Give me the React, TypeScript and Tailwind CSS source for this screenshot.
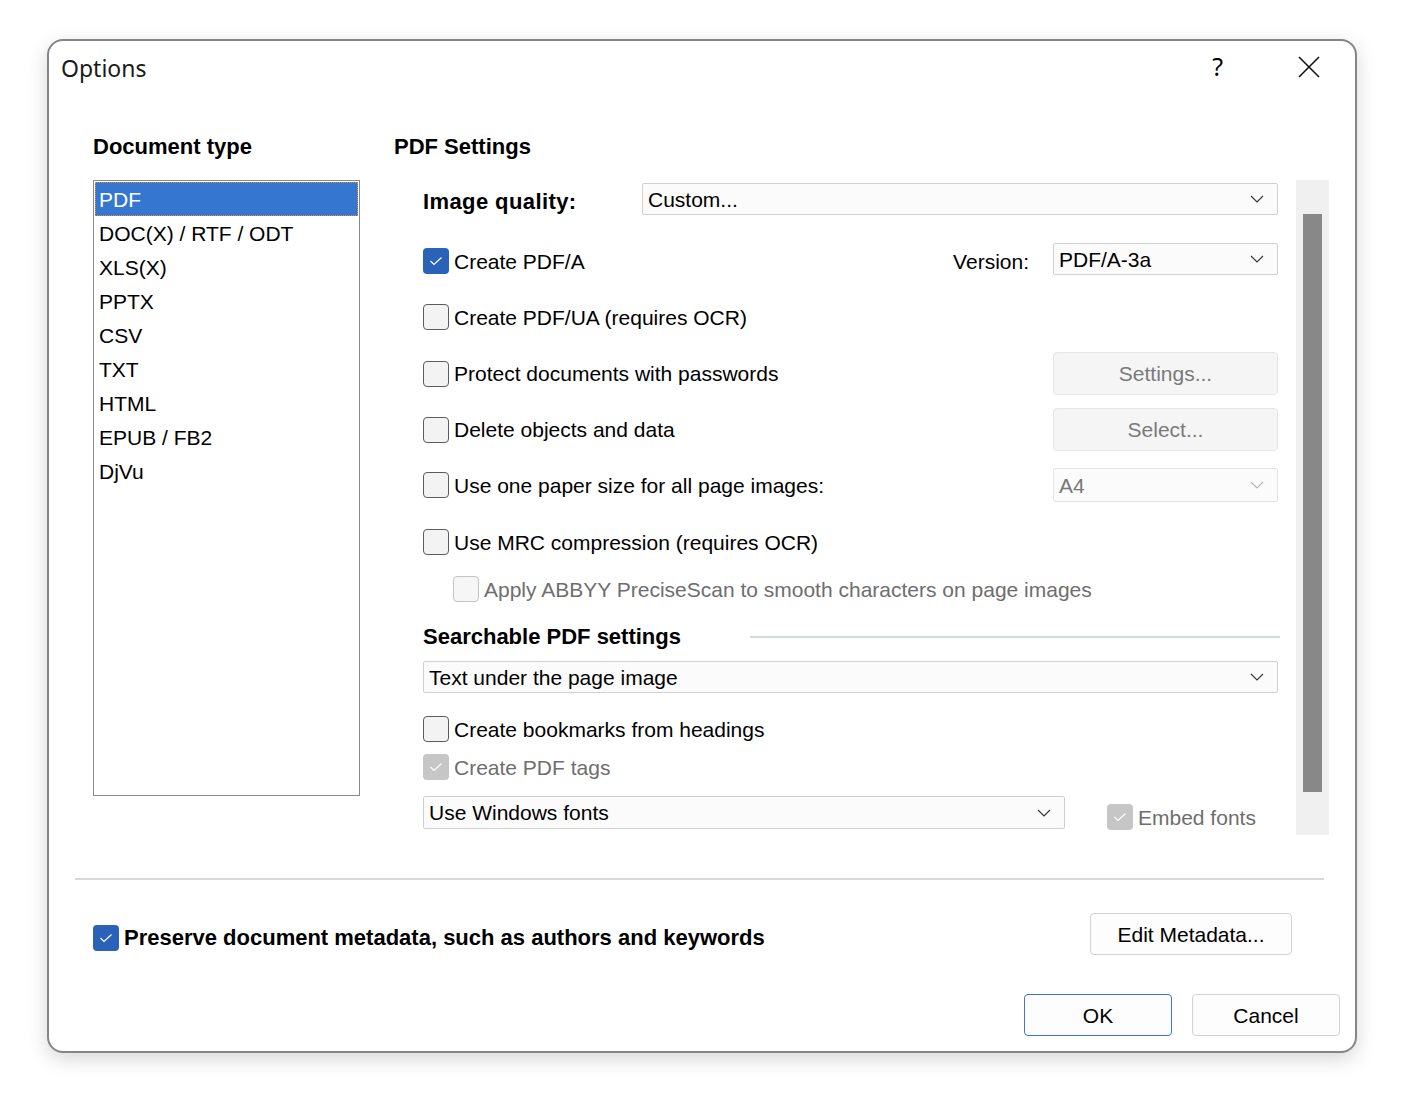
import React from 'react';

const FONT = "font-['Liberation_Sans',Arial,sans-serif]";

const Chevron: React.FC<{ color?: string }> = ({ color = '#333' }) => (
  <svg width="14" height="8" viewBox="0 0 14 8" fill="none">
    <polyline points="1,1 7,7 13,1" stroke={color} strokeWidth="1.1" />
  </svg>
);

const Check: React.FC = () => (
  <svg width="14" height="10" viewBox="0 0 14 10" fill="none">
    <polyline points="1.5,5 5,8.5 12.5,1.5" stroke="white" strokeWidth="1.2" />
  </svg>
);

const Checkbox: React.FC<{ checked?: boolean; disabled?: boolean }> = ({ checked, disabled }) => {
  if (checked) {
    return (
      <div
        className={`w-[26px] h-[26px] rounded-[4px] flex items-center justify-center shrink-0 ${
          disabled ? 'bg-[#c6c6c6]' : 'bg-[#2a62b9]'
        }`}
      >
        <Check />
      </div>
    );
  }
  return (
    <div
      className={`w-[26px] h-[26px] rounded-[4px] border shrink-0 ${
        disabled ? 'border-[#c4c4c4] bg-[#f6f6f6]' : 'border-[#5c5c5c] bg-[#f3f3f3]'
      }`}
    />
  );
};

const CheckRow: React.FC<{ label: string; checked?: boolean; disabled?: boolean; bold?: boolean }> = ({
  label,
  checked,
  disabled,
  bold,
}) => (
  <div className="flex items-center gap-[5px]">
    <Checkbox checked={checked} disabled={disabled} />
    <span
      className={`${bold ? 'font-bold text-[22px]' : 'text-[21px]'} ${disabled ? 'text-[#6e6e6e]' : 'text-black'} leading-none whitespace-nowrap`}
    >
      {label}
    </span>
  </div>
);

const Dropdown: React.FC<{ value: string; className?: string; disabled?: boolean }> = ({
  value,
  className = '',
  disabled,
}) => (
  <div
    className={`flex items-center justify-between pl-[5px] pr-[13px] border border-[#d0d0d0] rounded-[2px] bg-[#fbfbfb] ${className}`}
  >
    <span className={`text-[21px] leading-none ${disabled ? 'text-[#777]' : 'text-black'}`}>{value}</span>
    <Chevron color={disabled ? '#b5b5b5' : '#333'} />
  </div>
);

const Button: React.FC<{ label: string; className?: string; disabled?: boolean; primary?: boolean }> = ({
  label,
  className = '',
  disabled,
  primary,
}) => (
  <div
    className={`flex items-center justify-center rounded-[4px] border text-[21px] leading-none ${
      disabled
        ? 'bg-[#f5f5f5] border-[#e6e6e6] text-[#7a7a7a]'
        : primary
        ? 'bg-[#fdfdfd] border-[#3a78cf] text-black'
        : 'bg-[#fdfdfd] border-[#d2d2d2] text-black'
    } ${className}`}
  >
    {label}
  </div>
);

const docTypes = ['PDF', 'DOC(X) / RTF / ODT', 'XLS(X)', 'PPTX', 'CSV', 'TXT', 'HTML', 'EPUB / FB2', 'DjVu'];

export default function App() {
  return (
    <div className={`w-[1404px] h-[1108px] bg-white pt-[39px] pl-[47px] ${FONT}`}>
      <div className="w-[1310px] h-[1014px] border-2 border-[#858585] rounded-[16px] bg-white shadow-[0_6px_20px_rgba(0,0,0,0.16)] flex flex-col">
        {/* title bar */}
        <div className="flex items-center h-[30px] mt-[12px] pl-[12px]">
          <span className="font-['Noto_Sans',sans-serif] text-[23px] text-[#1a1a1a] leading-none flex-1">Options</span>
          <span className="font-['Noto_Sans',sans-serif] text-[25px] leading-none text-black mr-[75px] -mt-[3px]">?</span>
          <svg width="22" height="22" viewBox="0 0 22 22" className="mr-[35px] -mt-[2px]">
            <line x1="1" y1="1" x2="21" y2="21" stroke="#111" strokeWidth="1.6" />
            <line x1="21" y1="1" x2="1" y2="21" stroke="#111" strokeWidth="1.6" />
          </svg>
        </div>

        {/* main */}
        <div className="flex mt-[50px] pl-[44px]">
          {/* left column */}
          <div className="w-[267px] shrink-0">
            <div className="h-[28px] flex items-center font-bold text-[22px] leading-none">Document type</div>
            <div className="mt-[19px] h-[616px] border border-[#8a8a8a] p-[1px]">
              {docTypes.map((t, i) => (
                <div
                  key={t}
                  className={`h-[34px] flex items-center pl-[3px] text-[21px] leading-none ${
                    i === 0
                      ? 'bg-[#3476d0] text-white border border-dotted border-[#e08a3c]'
                      : 'text-black border border-transparent'
                  }`}
                >
                  {t}
                </div>
              ))}
            </div>
          </div>

          {/* right column */}
          <div className="ml-[34px] w-[935px]">
            <div className="h-[28px] flex items-center font-bold text-[22px] leading-none">PDF Settings</div>
            <div className="mt-[19px] h-[655px] flex">
              <div className="w-[884px] pl-[29px] flex flex-col">
                <div className="mt-[3px] h-[32px] flex items-center">
                  <span className="w-[219px] font-bold text-[22px] tracking-[0.4px] leading-none mt-[5px]">Image quality:</span>
                  <Dropdown value="Custom..." className="w-[636px] h-[32px]" />
                </div>

                <div className="mt-[28px] h-[36px] flex items-center">
                  <div className="flex-1">
                    <CheckRow label="Create PDF/A" checked />
                  </div>
                  <span className="text-[21px] leading-none mr-[24px]">Version:</span>
                  <Dropdown value="PDF/A-3a" className="w-[225px] h-[32px] self-start" />
                </div>

                <div className="mt-[20px] h-[36px] flex items-center">
                  <CheckRow label="Create PDF/UA (requires OCR)" />
                </div>

                <div className="mt-[17px] h-[43px] flex items-center justify-between">
                  <CheckRow label="Protect documents with passwords" />
                  <Button label="Settings..." disabled className="w-[225px] h-[43px]" />
                </div>

                <div className="mt-[13px] h-[43px] flex items-center justify-between">
                  <CheckRow label="Delete objects and data" />
                  <Button label="Select..." disabled className="w-[225px] h-[43px]" />
                </div>

                <div className="mt-[17px] h-[34px] flex items-center justify-between">
                  <CheckRow label="Use one paper size for all page images:" />
                  <Dropdown value="A4" disabled className="w-[225px] h-[34px] bg-[#f8f8f8] border-[#e4e4e4]" />
                </div>

                <div className="mt-[22px] h-[36px] flex items-center">
                  <CheckRow label="Use MRC compression (requires OCR)" />
                </div>

                <div className="mt-[11px] h-[36px] flex items-center pl-[30px]">
                  <CheckRow label="Apply ABBYY PreciseScan to smooth characters on page images" disabled />
                </div>

                <div className="mt-[15px] h-[30px] flex items-center">
                  <span className="w-[327px] font-bold text-[22px] leading-none">Searchable PDF settings</span>
                  <div className="flex-1 mr-[-2px] h-[2px] bg-[#d5dae2]" />
                </div>

                <Dropdown value="Text under the page image" className="mt-[9px] w-[855px] h-[32px]" />

                <div className="mt-[18px] h-[36px] flex items-center">
                  <CheckRow label="Create bookmarks from headings" />
                </div>

                <div className="mt-[2px] h-[36px] flex items-center">
                  <CheckRow label="Create PDF tags" checked disabled />
                </div>

                <div className="mt-[11px] flex items-start">
                  <Dropdown value="Use Windows fonts" className="w-[642px] h-[33px]" />
                  <div className="ml-[42px] mt-[8px]">
                    <CheckRow label="Embed fonts" checked disabled />
                  </div>
                </div>
              </div>

              {/* scrollbar */}
              <div className="ml-[18px] w-[33px] h-[655px] bg-[#f0f0f0] pt-[34px] pl-[7px]">
                <div className="w-[19px] h-[578px] bg-[#888888]" />
              </div>
            </div>
          </div>
        </div>

        {/* separator */}
        <div className="mt-[43px] ml-[26px] w-[1249px] h-[2px] bg-[#d9d9d9]" />

        {/* metadata row */}
        <div className="mt-[33px] flex items-center pl-[44px]">
          <div className="flex-1 mt-[7px]">
            <CheckRow label="Preserve document metadata, such as authors and keywords" checked bold />
          </div>
          <Button label="Edit Metadata..." className="w-[202px] h-[42px] mr-[63px]" />
        </div>

        {/* buttons */}
        <div className="mt-[39px] flex justify-end gap-[20px] pr-[15px]">
          <Button label="OK" primary className="w-[148px] h-[42px]" />
          <Button label="Cancel" className="w-[148px] h-[42px]" />
        </div>
      </div>
    </div>
  );
}
